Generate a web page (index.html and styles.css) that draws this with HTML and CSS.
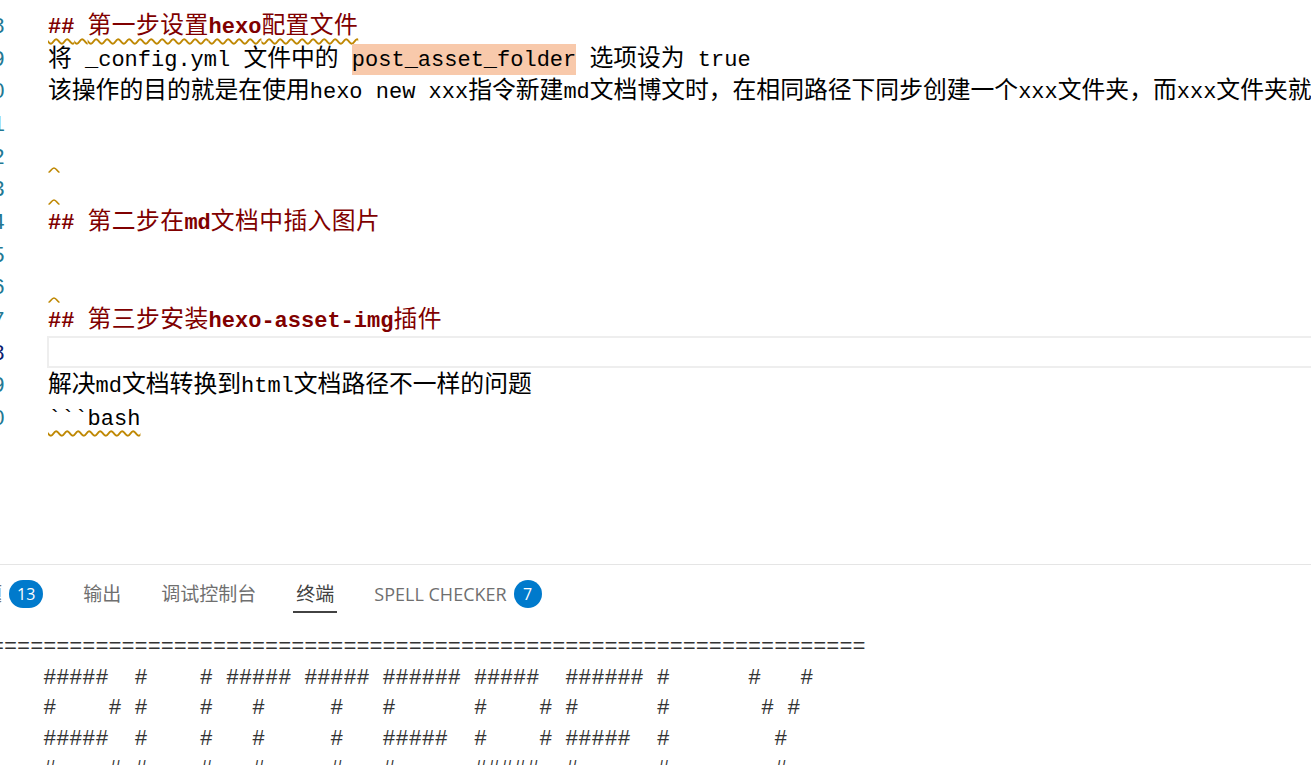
FILE: index.html
```html
<!DOCTYPE html>
<html lang="zh-CN">
<head>
<meta charset="utf-8">
<title>hexo 配置</title>
<link rel="stylesheet" href="styles.css">
</head>
<body>
<div class="editor">
  <div class="gutter">
    <div class="ln">18</div>
    <div class="ln">19</div>
    <div class="ln">20</div>
    <div class="ln">21</div>
    <div class="ln">22</div>
    <div class="ln">23</div>
    <div class="ln">24</div>
    <div class="ln">25</div>
    <div class="ln">26</div>
    <div class="ln">27</div>
    <div class="ln cur-ln">28</div>
    <div class="ln">29</div>
    <div class="ln">30</div>
  </div>
  <div class="code">
    <div class="line"><span class="h sq"><b>##</b> <span class="z">第一步设置</span><b>hexo</b><span class="z">配置文件</span></span></div>
    <div class="line"><span class="z">将</span> _config.yml <span class="z">文件中的</span> <span class="hl">post_asset_folder</span> <span class="z">选项设为</span> true</div>
    <div class="line"><span class="z">该操作的目的就是在使用</span>hexo new xxx<span class="z">指令新建</span>md<span class="z">文档博文时，在相同路径下同步创建一个</span>xxx<span class="z">文件夹，而</span>xxx<span class="z">文件夹就是用来存放图片的</span></div>
    <div class="line"></div>
    <div class="line"><svg class="tick" width="12" height="6" viewBox="0 0 12 6"><path d="M0.5 5.2 C2.5 5.2 3.5 1 6 1 C8.5 1 9.5 5.2 11.5 5.2" fill="none" stroke="#bf8803" stroke-width="1.6"/></svg></div>
    <div class="line"><svg class="tick" width="12" height="6" viewBox="0 0 12 6"><path d="M0.5 5.2 C2.5 5.2 3.5 1 6 1 C8.5 1 9.5 5.2 11.5 5.2" fill="none" stroke="#bf8803" stroke-width="1.6"/></svg></div>
    <div class="line"><span class="h"><b>##</b> <span class="z">第二步在</span><b>md</b><span class="z">文档中插入图片</span></span></div>
    <div class="line"></div>
    <div class="line"><svg class="tick" width="12" height="6" viewBox="0 0 12 6"><path d="M0.5 5.2 C2.5 5.2 3.5 1 6 1 C8.5 1 9.5 5.2 11.5 5.2" fill="none" stroke="#bf8803" stroke-width="1.6"/></svg></div>
    <div class="line"><span class="h"><b>##</b> <span class="z">第三步安装</span><b>hexo-asset-img</b><span class="z">插件</span></span></div>
    <div class="line cur"></div>
    <div class="line"><span class="z">解决</span>md<span class="z">文档转换到</span>html<span class="z">文档路径不一样的问题</span></div>
    <div class="line"><span class="sq">```bash</span></div>
  </div>
</div>
<div class="panel">
  <div class="tabs">
    <div class="tab"><span class="label">问题</span><span class="badge">13</span></div>
    <div class="tab"><span class="label">输出</span></div>
    <div class="tab"><span class="label">调试控制台</span></div>
    <div class="tab active"><span class="label">终端</span></div>
    <div class="tab"><span class="label latin">SPELL CHECKER</span><span class="badge">7</span></div>
  </div>
  <div class="terminal">===================================================================
    #####  #    # ##### ##### ###### #####  ###### #      #   #
    #    # #    #   #     #   #      #    # #      #       # #
    #####  #    #   #     #   #####  #    # #####  #        #
    #    # #    #   #     #   #      #####  #      #        #
    #    # #    #   #     #   #      #   #  #      #        #
    #####   ####    #     #   ###### #    # #      ######   #</div>
</div>
</body>
</html>
```
FILE: styles.css
```css
html, body {
  margin: 0;
  padding: 0;
  background: #ffffff;
}

body {
  width: 1311px;
  height: 765px;
  overflow: hidden;
}

.editor {
  display: flex;
  height: 564px;
  padding-top: 9px;
  box-sizing: border-box;
  overflow: hidden;
}

.gutter {
  flex: none;
  width: 60px;
  margin-left: -55px;
  margin-right: 43px;
  text-align: right;
  font-family: "Liberation Mono", monospace;
  font-size: 22px;
  color: #237893;
}

.ln {
  height: 32.67px;
  line-height: 38px;
}

.cur-ln {
  color: #0b216f;
}

.code {
  flex: 1;
  min-width: 0;
}

.line {
  height: 32.67px;
  line-height: 38px;
  white-space: pre;
  font-family: "Liberation Mono", "Noto Sans CJK SC", monospace;
  font-size: 22px;
  color: #000000;
}

.z {
  font-family: "Noto Sans CJK SC", sans-serif;
  font-size: 23.8px;
  line-height: 1;
  font-weight: normal;
}

.h {
  color: #800000;
}

.h b {
  font-weight: bold;
}

.h .z {
  letter-spacing: 0.4px;
}

.sq {
  text-decoration: underline wavy #bf8803;
  text-decoration-thickness: 1.5px;
  text-underline-offset: 5px;
}

.hl {
  display: inline-block;
  vertical-align: top;
  height: 31px;
  margin-top: 2px;
  line-height: 34px;
  background: #f8c9ab;
}

.tick {
  display: inline-block;
  vertical-align: bottom;
  margin-bottom: 5px;
}

.cur {
  border: 2px solid #eeeeee;
  margin-left: -1px;
  margin-right: -20px;
  box-sizing: border-box;
  line-height: 28px;
}

.panel {
  border-top: 1px solid #e5e5e5;
  height: 200px;
}

.tabs {
  display: flex;
  align-items: center;
  height: 58px;
  gap: 40px;
  margin-left: -36px;
  font-family: "Open Sans", "Noto Sans CJK SC", sans-serif;
  font-size: 19px;
  color: #6f6f6f;
}

.tab {
  display: flex;
  align-items: center;
}

.label {
  line-height: 26px;
  padding: 6px 0;
}

.latin {
  font-size: 18px;
}

.tab.active .label {
  color: #424242;
  padding: 6px 3px 4px;
  margin: 0 -3px;
  border-bottom: 2px solid #424242;
}

.badge {
  margin-left: 7px;
  min-width: 28px;
  height: 28px;
  padding: 0 8px;
  box-sizing: border-box;
  border-radius: 14px;
  background: #007acc;
  color: #ffffff;
  font-family: "Open Sans", sans-serif;
  font-size: 16px;
  line-height: 28px;
  text-align: center;
}

.terminal {
  margin-top: 10px;
  margin-left: -9px;
  white-space: pre;
  font-family: "Liberation Mono", monospace;
  font-size: 21.75px;
  line-height: 30.6px;
  color: #333333;
}
```
